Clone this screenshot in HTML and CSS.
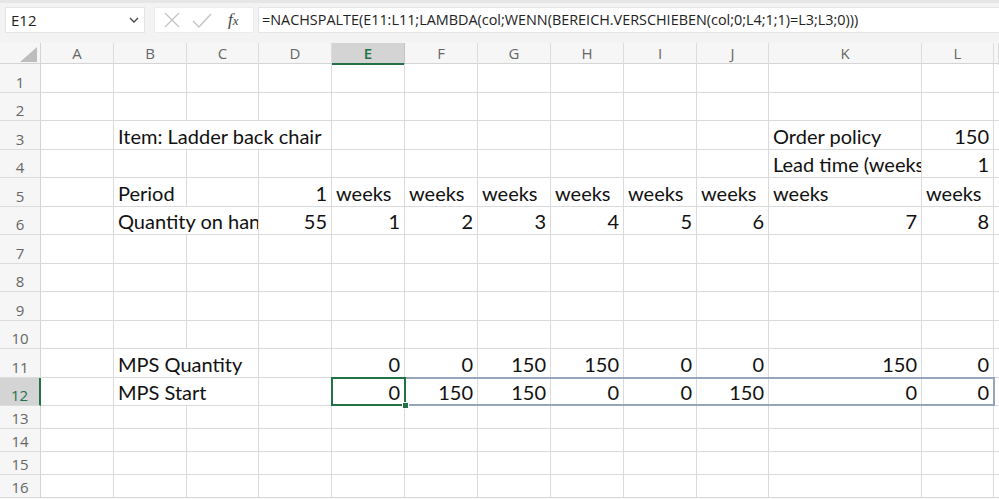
FILE: index.html
```html
<!DOCTYPE html>
<html lang="de">
<head>
    <meta charset="UTF-8">
    <title>Mappe1 - Excel</title>
    <link rel="stylesheet" href="styles.css">
</head>
<body>
    <div class="top-area">
        <div class="formula-row">
            <div class="name-box">
                <span>E12</span>
                <svg class="chevron" width="10" height="6" viewBox="0 0 10 6"><path d="M1 1 L5 5 L9 1" fill="none" stroke="#444" stroke-width="1.3"/></svg>
            </div>
            <div class="fx-buttons">
                <svg width="20" height="20" viewBox="0 0 20 20"><path d="M3 3 L17 17 M17 3 L3 17" stroke="#c4c4c4" stroke-width="1.4"/></svg>
                <svg width="22" height="20" viewBox="0 0 22 20"><path d="M2 11 L8 17 L20 4" fill="none" stroke="#c4c4c4" stroke-width="1.4"/></svg>
                <span class="fx">f<i>x</i></span>
            </div>
            <div class="formula-input">=NACHSPALTE(E11:L11;LAMBDA(col;WENN(BEREICH.VERSCHIEBEN(col;0;L4;1;1)=L3;L3;0)))</div>
        </div>
    </div>

    <div class="sheet">
        <div class="row col-heads">
            <div class="corner"><svg width="17" height="15" viewBox="0 0 17 15"><path d="M0 15 L17 15 L17 0 Z" fill="#bdbdbd"/></svg></div>
            <div class="ch">A</div><div class="ch">B</div><div class="ch">C</div><div class="ch">D</div>
            <div class="ch active">E</div><div class="ch">F</div><div class="ch">G</div><div class="ch">H</div>
            <div class="ch">I</div><div class="ch">J</div><div class="ch">K</div><div class="ch">L</div><div class="ch"></div>
        </div>

        <div class="row tall">
            <div class="rh">1</div>
            <div class="c"></div><div class="c"></div><div class="c"></div><div class="c"></div><div class="c"></div><div class="c"></div>
            <div class="c"></div><div class="c"></div><div class="c"></div><div class="c"></div><div class="c"></div><div class="c"></div><div class="c"></div>
        </div>
        <div class="row short">
            <div class="rh">2</div>
            <div class="c"></div><div class="c"></div><div class="c"></div><div class="c"></div><div class="c"></div><div class="c"></div>
            <div class="c"></div><div class="c"></div><div class="c"></div><div class="c"></div><div class="c"></div><div class="c"></div><div class="c"></div>
        </div>
        <div class="row tall">
            <div class="rh">3</div>
            <div class="c"></div>
            <div class="c span3">Item: Ladder back chair</div>
            <div class="c"></div><div class="c"></div><div class="c"></div><div class="c"></div><div class="c"></div><div class="c"></div>
            <div class="c">Order policy</div><div class="c num">150</div><div class="c"></div>
        </div>
        <div class="row short">
            <div class="rh">4</div>
            <div class="c"></div><div class="c"></div><div class="c"></div><div class="c"></div><div class="c"></div><div class="c"></div>
            <div class="c"></div><div class="c"></div><div class="c"></div><div class="c"></div>
            <div class="c">Lead time (weeks)</div><div class="c num">1</div><div class="c"></div>
        </div>
        <div class="row tall">
            <div class="rh">5</div>
            <div class="c"></div><div class="c">Period</div><div class="c"></div><div class="c num">1</div>
            <div class="c">weeks</div><div class="c">weeks</div><div class="c">weeks</div><div class="c">weeks</div>
            <div class="c">weeks</div><div class="c">weeks</div><div class="c">weeks</div><div class="c">weeks</div><div class="c"></div>
        </div>
        <div class="row short">
            <div class="rh">6</div>
            <div class="c"></div><div class="c span2">Quantity on hand</div><div class="c num">55</div>
            <div class="c num">1</div><div class="c num">2</div><div class="c num">3</div><div class="c num">4</div>
            <div class="c num">5</div><div class="c num">6</div><div class="c num">7</div><div class="c num">8</div><div class="c"></div>
        </div>
        <div class="row tall">
            <div class="rh">7</div>
            <div class="c"></div><div class="c"></div><div class="c"></div><div class="c"></div><div class="c"></div><div class="c"></div>
            <div class="c"></div><div class="c"></div><div class="c"></div><div class="c"></div><div class="c"></div><div class="c"></div><div class="c"></div>
        </div>
        <div class="row short">
            <div class="rh">8</div>
            <div class="c"></div><div class="c"></div><div class="c"></div><div class="c"></div><div class="c"></div><div class="c"></div>
            <div class="c"></div><div class="c"></div><div class="c"></div><div class="c"></div><div class="c"></div><div class="c"></div><div class="c"></div>
        </div>
        <div class="row tall">
            <div class="rh">9</div>
            <div class="c"></div><div class="c"></div><div class="c"></div><div class="c"></div><div class="c"></div><div class="c"></div>
            <div class="c"></div><div class="c"></div><div class="c"></div><div class="c"></div><div class="c"></div><div class="c"></div><div class="c"></div>
        </div>
        <div class="row short">
            <div class="rh">10</div>
            <div class="c"></div><div class="c"></div><div class="c"></div><div class="c"></div><div class="c"></div><div class="c"></div>
            <div class="c"></div><div class="c"></div><div class="c"></div><div class="c"></div><div class="c"></div><div class="c"></div><div class="c"></div>
        </div>
        <div class="row tall">
            <div class="rh">11</div>
            <div class="c"></div><div class="c span2">MPS Quantity</div><div class="c"></div>
            <div class="c num">0</div><div class="c num">0</div><div class="c num">150</div><div class="c num">150</div>
            <div class="c num">0</div><div class="c num">0</div><div class="c num">150</div><div class="c num">0</div><div class="c"></div>
        </div>
        <div class="row short selected-row">
            <div class="rh active">12</div>
            <div class="c"></div><div class="c span2">MPS Start</div><div class="c"></div>
            <div class="c num">0</div><div class="c num">150</div><div class="c num">150</div><div class="c num">0</div>
            <div class="c num">0</div><div class="c num">150</div><div class="c num">0</div><div class="c num">0</div><div class="c"></div>
            <div class="spill-range"></div>
            <div class="active-cell"><span class="fill-handle"></span></div>
        </div>
        <div class="row small">
            <div class="rh">13</div>
            <div class="c"></div><div class="c"></div><div class="c"></div><div class="c"></div><div class="c"></div><div class="c"></div>
            <div class="c"></div><div class="c"></div><div class="c"></div><div class="c"></div><div class="c"></div><div class="c"></div><div class="c"></div>
        </div>
        <div class="row small">
            <div class="rh">14</div>
            <div class="c"></div><div class="c"></div><div class="c"></div><div class="c"></div><div class="c"></div><div class="c"></div>
            <div class="c"></div><div class="c"></div><div class="c"></div><div class="c"></div><div class="c"></div><div class="c"></div><div class="c"></div>
        </div>
        <div class="row small">
            <div class="rh">15</div>
            <div class="c"></div><div class="c"></div><div class="c"></div><div class="c"></div><div class="c"></div><div class="c"></div>
            <div class="c"></div><div class="c"></div><div class="c"></div><div class="c"></div><div class="c"></div><div class="c"></div><div class="c"></div>
        </div>
        <div class="row small">
            <div class="rh">16</div>
            <div class="c"></div><div class="c"></div><div class="c"></div><div class="c"></div><div class="c"></div><div class="c"></div>
            <div class="c"></div><div class="c"></div><div class="c"></div><div class="c"></div><div class="c"></div><div class="c"></div><div class="c"></div>
        </div>
    </div>
</body>
</html>
```

FILE: styles.css
```css
body {
    margin: 0;
    padding: 0;
    width: 999px;
    height: 499px;
    overflow: hidden;
    background: #f6f6f6;
    font-family: 'Open Sans', 'Liberation Sans', sans-serif;
}
* {
    box-sizing: border-box;
}

/* formula bar */
.top-area {
    height: 43px;
    background: #f3f3f3;
    border-top: 3px solid #e6e6e6;
    padding: 4px 0 0 5px;
}
.formula-row {
    display: flex;
    height: 26px;
}
.name-box {
    width: 140px;
    background: white;
    border: 1px solid #e4e4e4;
    display: flex;
    align-items: center;
    justify-content: space-between;
    padding: 0 5px 0 5px;
    font-size: 15px;
    color: #222;
}
.fx-buttons {
    width: 100px;
    margin-left: 9px;
    background: white;
    border: 1px solid #ececec;
    display: flex;
    align-items: center;
    gap: 9px;
    padding-left: 7px;
}
.fx {
    font-family: 'Liberation Serif', serif;
    font-style: italic;
    font-size: 17px;
    color: #444;
    margin-left: 6px;
}
.fx i {
    font-size: 13px;
}
.formula-input {
    flex: 1;
    margin-left: 4px;
    background: white;
    border: 1px solid #e4e4e4;
    border-right: none;
    padding-left: 3px;
    font-size: 14.4px;
    line-height: 24px;
    color: #222;
    white-space: nowrap;
    overflow: hidden;
}

/* grid */
.sheet {
    background: white;
}
.row {
    display: grid;
    grid-template-columns: 41px 73px 73px 72px 73px 73px 73px 73px 73px 73px 72px 153px 72px 1fr;
}
.row.tall { height: 29px; }
.row.short { height: 28px; }
.row.small { height: 23px; }
.col-heads {
    height: 21px;
    background: #f6f6f6;
    border-bottom: 1px solid #d4d4d4;
}
.corner {
    border-right: 1px solid #d4d4d4;
    display: flex;
    justify-content: flex-end;
    align-items: flex-end;
    padding: 0 3px 3px 0;
}
.ch {
    border-right: 1px solid #dcdcdc;
    text-align: center;
    font-size: 15px;
    line-height: 20px;
    color: #666;
}
.ch.active {
    background: #d4d4d4;
    color: #217346;
    font-weight: 600;
    border-bottom: 2px solid #217346;
    border-right-color: #c4c4c4;
}
.rh {
    background: #f6f6f6;
    border-right: 1px solid #d4d4d4;
    border-bottom: 1px solid #dcdcdc;
    display: flex;
    align-items: flex-end;
    justify-content: center;
    padding-bottom: 0;
    font-size: 15px;
    color: #666;
}
.rh.active {
    background: #d4d4d4;
    color: #217346;
    border-right: 2px solid #217346;
}
.c {
    border-right: 1px solid #dadada;
    border-bottom: 1px solid #dadada;
    padding: 0 4px 1px 4px;
    font-family: 'Lato', 'Liberation Sans', sans-serif;
    font-size: 20px;
    color: #111;
    white-space: nowrap;
    overflow: hidden;
    display: flex;
    align-items: flex-end;
}
.c.num {
    justify-content: flex-end;
}
.c.span2 {
    grid-column: span 2;
}
.c.span3 {
    grid-column: span 3;
}

/* selection */
.selected-row {
    position: relative;
}
.spill-range {
    position: absolute;
    left: 331px;
    top: -1px;
    width: 664px;
    height: 29px;
    border: 2px solid #97a5ba;
}
.active-cell {
    position: absolute;
    left: 331px;
    top: -1px;
    width: 75px;
    height: 29px;
    border: 2px solid #217346;
}
.fill-handle {
    position: absolute;
    right: -5px;
    bottom: -5px;
    width: 7px;
    height: 7px;
    background: #217346;
    border: 1px solid white;
}
```
